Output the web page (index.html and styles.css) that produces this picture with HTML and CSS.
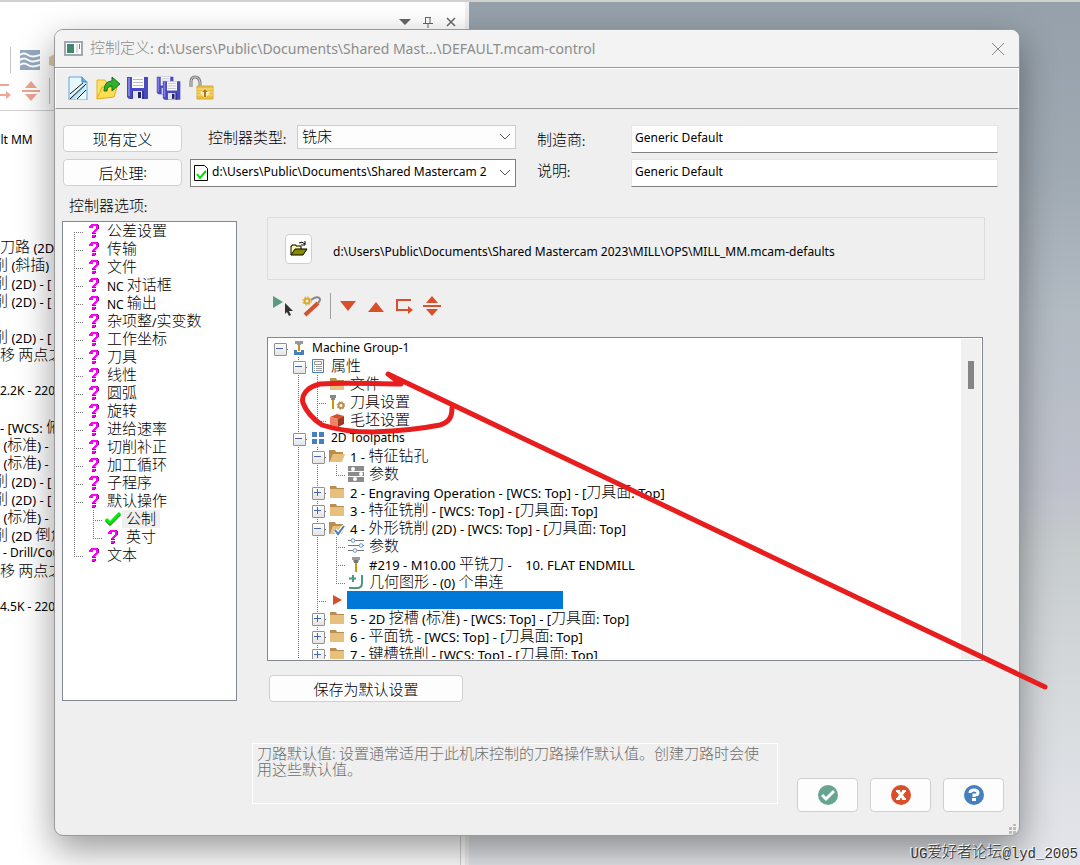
FILE: index.html
```html
<!DOCTYPE html>
<html lang="zh-CN">
<head>
<meta charset="utf-8">
<title>控制定义</title>
<link rel="stylesheet" href="styles.css">
</head>
<body>
<svg class="defs" aria-hidden="true">
  <symbol id="q" viewBox="0 0 12 16"><path d="M1 5V3h1V2h1V1h6v1h1v1h1v3h-1v1H9v1H8v1H7v2H4V9h1V8h1V7h1V6h1V3H5v2z" fill="#f0f"/><path d="M9 1h1v1h1v4h-1V2H9zM4 10h4v1H4z" fill="#909"/><path d="M4 12h4v2H4z" fill="#f0f"/><path d="M4 14h3v1H4zM7 12h1v2H7z" fill="#909"/></symbol>
  <symbol id="check" viewBox="0 0 16 14"><path d="M1 8l4 4L15 2" fill="none" stroke="#070" stroke-width="3"/><path d="M1 7l4 4L15 1" fill="none" stroke="#0e0" stroke-width="3"/></symbol>
  <symbol id="folder" viewBox="0 0 16 16"><path d="M1 2h6l1 2h7v3H1z" fill="#b98e4e"/><path d="M1 5h14v9H1z" fill="#e8c07e"/></symbol>
  <symbol id="folder-open" viewBox="0 0 16 16"><path d="M0 2h6l1 2h7v3H4l-3 7H0z" fill="#b98e4e"/><path d="M4 6h12l-3 8H1z" fill="#e8c07e"/></symbol>
  <symbol id="folder-check" viewBox="0 0 16 16"><path d="M0 2h6l1 2h7v3H4l-3 7H0z" fill="#b98e4e"/><path d="M4 6h12l-3 8H1z" fill="#e8c07e"/><path d="M6 10l3 4 6-8" fill="none" stroke="#fff" stroke-width="4"/><path d="M6 10l3 4 6-8" fill="none" stroke="#4480bd" stroke-width="2"/></symbol>
  <symbol id="machine" viewBox="0 0 16 16"><path d="M4 1h8v3h-2v1H6V4H4z" fill="#999"/><path d="M7 5h2v6H7z" fill="#cc9a00"/><path d="M3 10h3v2h4v-2h3v5H3z" fill="#4480bd"/></symbol>
  <symbol id="props" viewBox="0 0 16 16"><path d="M2.500 1.500h11v13h-11z" fill="#fff" stroke="#4480bd"/><path d="M4.500 3.500h7v3h-7z" fill="#fff" stroke="#999"/><path d="M4 8.500h1M6 8.500h6M4 10.500h1M6 10.500h6M4 12.500h1M6 12.500h6" stroke="#999"/></symbol>
  <symbol id="tool" viewBox="0 0 16 16"><path d="M4 1h8v3h-1l-1 3H6L5 4H4z" fill="#999"/><path d="M6 4h4v3H6z" fill="#777"/><path d="M7 7h2v9H7z" fill="#cc9a00"/></symbol>
  <symbol id="tool-set" viewBox="0 0 16 16"><path d="M1 1h6v3H6v2H2V4H1z" fill="#888"/><path d="M3 6h2v9H3z" fill="#cc9a00"/><circle cx="12" cy="11.500" r="2.500" fill="none" stroke="#b98e4e" stroke-width="2"/><circle cx="12" cy="11.500" r="3.800" fill="none" stroke="#b98e4e" stroke-dasharray="1.500 1.480"/></symbol>
  <symbol id="stock" viewBox="0 0 16 16"><path d="M1 5l7-3 7 2-6 3z" fill="#d94f2b"/><path d="M1 5l8 2v8l-8-2z" fill="#f08068"/><path d="M9 7l6-3v8l-6 3z" fill="#9c3a20"/></symbol>
  <symbol id="grid4" viewBox="0 0 16 16"><path d="M2 2h5v5H2zM9 2h5v5H9zM2 9h5v5H2zM9 9h5v5H9z" fill="#4480bd"/></symbol>
  <symbol id="params-gray" viewBox="0 0 16 16"><path d="M0 0h16v5H0zM0 6h16v4H0zM0 11h16v5H0z" fill="#8b8b8b"/><path d="M0 5.500h16M0 10.500h16" stroke="#fff"/><circle cx="5" cy="3" r="2" fill="#fff"/><circle cx="13" cy="8" r="2" fill="#fff"/><circle cx="7" cy="13" r="2" fill="#fff"/></symbol>
  <symbol id="params" viewBox="0 0 16 16"><path d="M0 2.500h16M0 7.500h16M0 12.500h16" stroke="#777"/><g fill="#fff" stroke="#5f9bd3"><circle cx="5" cy="2.500" r="1.800"/><circle cx="13" cy="7.500" r="1.800"/><circle cx="7" cy="12.500" r="1.800"/></g></symbol>
  <symbol id="geom" viewBox="0 0 16 16"><path d="M5 1v7M1 4.500h7" stroke="#4c9a7e" stroke-width="2"/><path d="M14 1v8q0 5-5 5H1" fill="none" stroke="#4c9a7e" stroke-width="2"/></symbol>
  <symbol id="insert" viewBox="0 0 16 16"><path d="M4 3v10l9-5z" fill="#d94f2b"/></symbol>
  <symbol id="plusminus" viewBox="0 0 20 20"><path d="M10 0l6 7H4zM10 20l6-7H4zM1 9h18v2H1z" fill="#d94f2b"/></symbol>
  <symbol id="step" viewBox="0 0 20 20"><path d="M17 4H3v10h12" fill="none" stroke="#d94f2b" stroke-width="2"/><path d="M14 10l5 4-5 4z" fill="#d94f2b"/></symbol>
  <symbol id="chev" viewBox="0 0 12 8"><path d="M1 1l5 5 5-5" fill="none" stroke="#555"/></symbol>
  <symbol id="disk" viewBox="0 0 24 24"><path d="M1 1h21v22H3l-2-2z" fill="#4a4ac0"/><path d="M2 2h2v18H2z" fill="#8080e4"/><path d="M6 1h12v11H6z" fill="#fafafa"/><path d="M7 3.500h10M7 6.500h10M7 9.500h10" stroke="#b8b8c0"/><path d="M6 15h12v8H6z" fill="#3434a0"/><path d="M7 15h9v8H7z" fill="#e0e4f0"/><path d="M12 16h3v6h-3z" fill="#222266"/></symbol>
</svg>

<div class="app">
  <aside class="manager">
    <header class="manager-head">
      <svg width="12" height="12" viewBox="0 0 12 12"><path d="M0 3h12L6 9z" fill="#666"/></svg>
      <svg width="12" height="12" viewBox="0 0 12 12"><path d="M3.500 1v6M8 1v6M3 1.500h6M1 7.500h10M6 8v4" fill="none" stroke="#666"/></svg>
      <svg width="12" height="12" viewBox="0 0 12 12"><path d="M2 2l8 8M10 2l-8 8" stroke="#666" stroke-width="1.500"/></svg>
    </header>
    <div class="manager-tools">
      <div class="tool-line upper"><i class="sep"></i>
        <svg width="20" height="20" viewBox="0 0 20 20"><path d="M0 0h20v20H0z" fill="#95a9bf"/><path d="M0 5q4-3 8 0t12 0M0 10q4-3 8 0t12 0M0 15q4-3 8 0t12 0" fill="none" stroke="#fff" stroke-width="2"/></svg>
        <svg width="8" height="14" viewBox="0 0 8 14"><path d="M0 4l8-4v14l-8-2z" fill="#dfc9a4"/></svg>
      </div>
      <div class="tool-line faded"><svg width="22" height="20"><use href="#step"/></svg><svg width="20" height="20"><use href="#plusminus"/></svg><i class="sep"></i></div>
    </div>
    <div class="manager-pane">
      <div class="manager-list">
        <p class="first cut">ult MM</p>
        <p><b>刀路</b> (2D</p><p class="cut"><b>削</b> (<b>斜插</b>)</p><p class="cut"><b>削</b> (2D) - [</p><p class="cut"><b>削</b> (2D) - [</p><p></p>
        <p class="cut"><b>削</b> (2D) - [</p><p><b>移 两点之</b></p><p></p><p class="plain">2.2K - 220</p><p></p>
        <p>- [WCS: <b>俯</b></p><p>&nbsp;(<b>标准</b>) -</p><p>&nbsp;(<b>标准</b>) -</p><p class="cut"><b>削</b> (2D) - [</p><p class="cut"><b>削</b> (2D) - [</p>
        <p>&nbsp;(<b>标准</b>) -</p><p class="cut"><b>削</b> (2D <b>倒角</b></p><p class="plain">&nbsp;- Drill/Cou</p><p><b>移 两点之</b></p><p></p><p class="plain">4.5K - 220</p>
      </div>
    </div>
  </aside>
  <main class="viewport"></main>
</div>

<section class="dialog" role="dialog" aria-labelledby="dlg-title">
  <header class="titlebar">
    <svg width="19" height="15" viewBox="0 0 19 15"><path d="M1 1h17v13H1z" fill="#fff" stroke="#a0a8b0" stroke-width="2"/><path d="M3 3h7v9H3z" fill="#3d8a68"/><path d="M3 3h7v2H3z" fill="#4d7899"/><path d="M12 3h2v9h-2z" fill="#ddd"/><path d="M15 3h1v5h-1z" fill="#39a"/></svg>
    <h1 id="dlg-title"><b>控制定义</b>: d:\Users\Public\Documents\Shared Mast...\DEFAULT.mcam-control</h1>
    <button class="close" aria-label="关闭"><svg width="14" height="14" viewBox="0 0 14 14"><path d="M1 1l12 12M13 1L1 13" stroke="#888"/></svg></button>
  </header>

  <nav class="toolbar">
    <button aria-label="新建"><svg width="24" height="24" viewBox="0 0 24 24"><path d="M3 1h13l5 5v18H3z" fill="#e8f8ff" stroke="#5ba5e8"/><path d="M16 1v5h5" fill="#6ab6ee" stroke="#347ab8"/><path d="M4 21L19 8v5L9 23H4z" fill="#b8e4f8"/><path d="M4 18L17 7M4 23L20 8M11 23l9-9" stroke="#111"/></svg></button>
    <button aria-label="打开"><svg width="24" height="24" viewBox="0 0 24 24"><path d="M1 23V4h8l2 3h9v5" fill="#ffe46a" stroke="#e8b020"/><path d="M1 23l5-12h15l-3 10z" fill="#ffdf50" stroke="#e0a818"/><path d="M8 15q0-10 8-10V1l8 7-8 7V10q-5 0-5 5z" fill="#30b030" stroke="#157015"/></svg></button>
    <button aria-label="保存"><svg width="24" height="24"><use href="#disk"/></svg></button>
    <button aria-label="全部保存"><svg width="26" height="26" viewBox="0 0 26 26"><use href="#disk" width="19" height="21"/><use href="#disk" x="6" y="5" width="20" height="21"/></svg></button>
    <button aria-label="解锁"><svg width="26" height="26" viewBox="0 0 26 26"><path d="M3 12V7q0-5 4-5t5 5v4" fill="none" stroke="#777" stroke-width="3"/><path d="M3 12V7q0-5 4-5t5 5v4" fill="none" stroke="#ddd"/><path d="M9 11h16v13H9z" fill="#e8c040" stroke="#d8a838"/><path d="M9 14h16M9 17h16M9 20h16" stroke="#f6e080"/><path d="M17 13l5 5-5 5-5-5z" fill="#fff" opacity=".6"/><path d="M17 14l3 3h-2v5h-2v-5h-2z" fill="#b07818"/></svg></button>
  </nav>

  <form class="form" onsubmit="return false">
    <button class="btn"><b>现有定义</b></button>
    <div class="type-row">
      <label for="ctype"><b>控制器类型</b>:</label>
      <span class="combo"><select id="ctype" class="zh"><option>铣床</option></select><svg width="12" height="8"><use href="#chev"/></svg></span>
    </div>
    <label for="maker"><b>制造商</b>:</label>
    <input id="maker" type="text" value="Generic Default">
    <button class="btn"><b>后处理</b>:</button>
    <span class="combo post">
      <svg width="14" height="16" viewBox="0 0 14 16"><path d="M.5.500h10l3 3v12H.500z" fill="#fff" stroke="#000"/><path d="M3 9l3 4 6-7" fill="none" stroke="#0d0" stroke-width="2"/></svg>
      <select aria-label="后处理"><option>d:\Users\Public\Documents\Shared Mastercam 2</option></select><svg width="12" height="8"><use href="#chev"/></svg></span>
    <label for="desc" class="upper-label"><b>说明</b>:</label>
    <input id="desc" type="text" value="Generic Default">
  </form>

  <div class="body">
    <div class="options">
      <h2><b>控制器选项</b>:</h2>
      <ul class="tree" role="tree">
        <li><i class="g e first"></i><svg class="qi"><use href="#q"/></svg><span><b>公差设置</b></span></li>
        <li><i class="g e"></i><svg class="qi"><use href="#q"/></svg><span><b>传输</b></span></li>
        <li><i class="g e"></i><svg class="qi"><use href="#q"/></svg><span><b>文件</b></span></li>
        <li><i class="g e"></i><svg class="qi"><use href="#q"/></svg><span>NC <b>对话框</b></span></li>
        <li><i class="g e"></i><svg class="qi"><use href="#q"/></svg><span>NC <b>输出</b></span></li>
        <li><i class="g e"></i><svg class="qi"><use href="#q"/></svg><span><b>杂项整</b>/<b>实变数</b></span></li>
        <li><i class="g e"></i><svg class="qi"><use href="#q"/></svg><span><b>工作坐标</b></span></li>
        <li><i class="g e"></i><svg class="qi"><use href="#q"/></svg><span><b>刀具</b></span></li>
        <li><i class="g e"></i><svg class="qi"><use href="#q"/></svg><span><b>线性</b></span></li>
        <li><i class="g e"></i><svg class="qi"><use href="#q"/></svg><span><b>圆弧</b></span></li>
        <li><i class="g e"></i><svg class="qi"><use href="#q"/></svg><span><b>旋转</b></span></li>
        <li><i class="g e"></i><svg class="qi"><use href="#q"/></svg><span><b>进给速率</b></span></li>
        <li><i class="g e"></i><svg class="qi"><use href="#q"/></svg><span><b>切削补正</b></span></li>
        <li><i class="g e"></i><svg class="qi"><use href="#q"/></svg><span><b>加工循环</b></span></li>
        <li><i class="g e"></i><svg class="qi"><use href="#q"/></svg><span><b>子程序</b></span></li>
        <li><i class="g e"></i><svg class="qi"><use href="#q"/></svg><span><b>默认操作</b></span></li>
        <li><i class="g v"></i><i class="g e"></i><svg class="ci"><use href="#check"/></svg><span class="current"><b>公制</b></span></li>
        <li><i class="g v"></i><i class="g e last"></i><svg class="qi"><use href="#q"/></svg><span><b>英寸</b></span></li>
        <li><i class="g e last"></i><svg class="qi"><use href="#q"/></svg><span><b>文本</b></span></li>
      </ul>
    </div>

    <div class="defaults">
      <div class="path-box">
        <button class="btn open" aria-label="打开"><svg width="18" height="16" viewBox="0 0 18 16"><path d="M1 14V5h1V4h4v1h5v3" fill="#ffffa0" stroke="#000"/><path d="M1 14l4-6h12l-4 6z" fill="#8a8a00" stroke="#000"/><path d="M9 2q3-2 6 1M15 0v4h-4" fill="none" stroke="#000"/></svg></button>
        <span>d:\Users\Public\Documents\Shared Mastercam 2023\MILL\OPS\MILL_MM.mcam-defaults</span>
      </div>
      <div class="tree-tools">
        <button aria-label="选择"><svg width="22" height="22" viewBox="0 0 22 22"><path d="M1 1l10 6-10 6z" fill="#5a9a80"/><path d="M13 8l8 8h-4l2 4-2 1-2-4-2 2z" fill="#333"/></svg></button>
        <button aria-label="参数"><svg width="20" height="22" viewBox="0 0 20 22"><path d="M3 20L16 8" stroke="#d94f2b" stroke-width="4"/><path d="M9 5q7-5 9-1 0 3-3 5" fill="none" stroke="#888" stroke-width="2"/><circle cx="5" cy="6" r="2.500" fill="none" stroke="#d8a820" stroke-width="2"/><circle cx="5" cy="6" r="4.200" fill="none" stroke="#d8a820" stroke-dasharray="1.700 1.600"/></svg></button>
        <i class="sep"></i>
        <button aria-label="下移"><svg width="20" height="20" viewBox="0 0 20 20"><path d="M2 5h16l-8 10z" fill="#d94f2b"/></svg></button>
        <button aria-label="上移"><svg width="20" height="20" viewBox="0 0 20 20"><path d="M2 16h16L10 6z" fill="#d94f2b"/></svg></button>
        <button aria-label="插入"><svg width="20" height="20"><use href="#step"/></svg></button>
        <button aria-label="滚动"><svg width="20" height="20"><use href="#plusminus"/></svg></button>
      </div>
      <div class="ops">
        <ul class="tree" role="tree">
          <li><i class="g x root"></i><svg><use href="#machine"/></svg><span>Machine Group-1</span></li>
          <li><i class="g"></i><i class="g x"></i><svg><use href="#props"/></svg><span><b>属性</b></span></li>
          <li><i class="g"></i><i class="g v"></i><i class="g e"></i><svg><use href="#folder"/></svg><span><b>文件</b></span></li>
          <li><i class="g"></i><i class="g v"></i><i class="g e"></i><svg><use href="#tool-set"/></svg><span><b>刀具设置</b></span></li>
          <li><i class="g"></i><i class="g v"></i><i class="g e last"></i><svg><use href="#stock"/></svg><span><b>毛坯设置</b></span></li>
          <li><i class="g"></i><i class="g x"></i><svg><use href="#grid4"/></svg><span>2D Toolpaths</span></li>
          <li class="mixed"><i class="g"></i><i class="g v"></i><i class="g x"></i><svg><use href="#folder-open"/></svg><span>1 - <b>特征钻孔</b></span></li>
          <li><i class="g"></i><i class="g v"></i><i class="g v"></i><i class="g e last"></i><svg><use href="#params-gray"/></svg><span><b>参数</b></span></li>
          <li class="mixed"><i class="g"></i><i class="g v"></i><i class="g x plus"></i><svg><use href="#folder"/></svg><span>2 - Engraving Operation - [WCS: Top] - [<b>刀具面</b>: Top]</span></li>
          <li class="mixed"><i class="g"></i><i class="g v"></i><i class="g x plus"></i><svg><use href="#folder"/></svg><span>3 - <b>特征铣削</b> - [WCS: Top] - [<b>刀具面</b>: Top]</span></li>
          <li class="mixed"><i class="g"></i><i class="g v"></i><i class="g x"></i><svg><use href="#folder-check"/></svg><span>4 - <b>外形铣削</b> (2D) - [WCS: Top] - [<b>刀具面</b>: Top]</span></li>
          <li><i class="g"></i><i class="g v"></i><i class="g v"></i><i class="g e"></i><svg><use href="#params"/></svg><span><b>参数</b></span></li>
          <li class="mixed"><i class="g"></i><i class="g v"></i><i class="g v"></i><i class="g e"></i><svg><use href="#tool"/></svg><span>#219 - M10.00 <b>平铣刀</b> - &nbsp;&nbsp; 10. FLAT ENDMILL</span></li>
          <li class="mixed"><i class="g"></i><i class="g v"></i><i class="g v"></i><i class="g e last"></i><svg><use href="#geom"/></svg><span><b>几何图形</b> - (0) <b>个串连</b></span></li>
          <li><i class="g"></i><i class="g v"></i><i class="g e"></i><svg><use href="#insert"/></svg><span class="insert-bar"></span></li>
          <li class="mixed"><i class="g"></i><i class="g v"></i><i class="g x plus"></i><svg><use href="#folder"/></svg><span>5 - 2D <b>挖槽</b> (<b>标准</b>) - [WCS: Top] - [<b>刀具面</b>: Top]</span></li>
          <li class="mixed"><i class="g"></i><i class="g v"></i><i class="g x plus"></i><svg><use href="#folder"/></svg><span>6 - <b>平面铣</b> - [WCS: Top] - [<b>刀具面</b>: Top]</span></li>
          <li class="mixed"><i class="g"></i><i class="g v"></i><i class="g x plus"></i><svg><use href="#folder"/></svg><span>7 - <b>键槽铣削</b> - [WCS: Top] - [<b>刀具面</b>: Top]</span></li>
        </ul>
        <div class="scroll"><i></i></div>
      </div>
      <button class="btn save"><b>保存为默认设置</b></button>
    </div>
  </div>

  <footer class="foot">
    <p class="note">刀路默认值: 设置通常适用于此机床控制的刀路操作默认值。创建刀路时会使用这些默认值。</p>
    <div class="actions">
      <button class="btn" aria-label="确定"><svg width="20" height="20" viewBox="0 0 20 20"><circle cx="10" cy="10" r="10" fill="#68a590"/><path d="M4 10l4 4 8-8" fill="none" stroke="#fff" stroke-width="3"/></svg></button>
      <button class="btn" aria-label="取消"><svg width="20" height="20" viewBox="0 0 20 20"><circle cx="10" cy="10" r="10" fill="#d94f2b"/><path d="M7 6l6 8M13 6l-6 8" stroke="#fff" stroke-width="3"/><path d="M5 6h4M11 6h4M5 14h4M11 14h4" stroke="#fff" stroke-width="2"/></svg></button>
      <button class="btn" aria-label="帮助"><svg width="20" height="20" viewBox="0 0 20 20"><circle cx="10" cy="10" r="10" fill="#4480bd"/><path d="M6 8q0-3 4-3t4 3q0 2-4 2v2" fill="none" stroke="#fff" stroke-width="3"/><path d="M8 13h4v3H8z" fill="#fff"/></svg></button>
    </div>
  </footer>
  <svg class="grip" width="10" height="10" viewBox="0 0 10 10"><path d="M5 0h3v2H5zM1 3h3v3H1zM5 3h3v3H5zM1 7h3v3H1zM5 7h3v3H5z" fill="#bbb"/></svg>
</section>

<svg class="annotation" aria-hidden="true"><path d="M1045 687L388 374L401 384C375 384 345 382 320 384C306 387 301 396 303 403C306 411 313 419 322 425C340 431 357 432 373 432C398 431 420 429 440 425C450 422 452 416 452 408"/></svg>
<div class="watermark">UG<b>爱好者论坛</b>@lyd_2005</div>
</body>
</html>
```
FILE: styles.css
```css
* { box-sizing: border-box; }
html, body { height: 100%; margin: 0; }
body {
  position: relative;
  overflow: hidden;
  background: #fff;
  color: #000;
  font: 12px/18px "Noto Sans", "Noto Sans CJK SC", sans-serif;
}
b { font: 300 15px/16px "Noto Sans CJK SC", sans-serif; vertical-align: 1px; }
p, h1, h2, ul { margin: 0; padding: 0; }
h1, h2 { font-weight: normal; }
button, input, select { font: inherit; color: inherit; }
button { padding: 0; border: 0; background: none; display: flex; align-items: center; justify-content: center; }
svg { display: block; flex: none; }
.defs { position: absolute; width: 0; height: 0; }
.sep { width: 1px; height: 26px; background: #c4c4c4; }

/* Main window behind the dialog */
.app { display: grid; grid-template-columns: 469px 1fr; height: 100%; border-top: 2px solid #d0d0d0; }
.manager { display: flex; flex-direction: column; background: #fff; border-right: 4px solid #f0f0f0; overflow: hidden; }
.manager-head { height: 42px; display: flex; justify-content: flex-end; gap: 11px; padding: 14px 8px 0; }
.manager-tools { height: 67px; border-bottom: 1px solid #d0d0d0; }
.tool-line { display: flex; align-items: center; height: 31px; }
.upper { padding-left: 10px; gap: 9px; }
.faded { margin-left: -9px; gap: 8px; }
.faded svg { opacity: .5; }
.manager-pane { flex: 1; margin-right: 4px; border-right: 1px solid #d0d0d0; }
.manager-list { width: 55px; font-size: 13px; }
.manager-list p { height: 18px; white-space: nowrap; overflow: hidden; }
.manager-list .first { margin: 20px 0 89px; font-size: 12px; }
.manager-list .cut { text-indent: -7px; }
.manager-list .plain { font-size: 12px; }
.viewport { background: linear-gradient(#95a0aa, #a0aab3 20%, #b2bac2 36%, #bfc2cc 56%, #c6cbcc 63%, #d6dadd 80%, #e3e5ea); }

/* Dialog window */
.dialog {
  position: absolute;
  inset: 29px 60px 29px 54px;
  display: flex;
  flex-direction: column;
  background: #efefef;
  border: 1px solid #999;
  border-radius: 9px;
  box-shadow: 0 14px 36px rgba(0, 0, 0, .4);
}
.titlebar { display: flex; align-items: center; height: 38px; padding: 0 14px 0 9px; background: #f3f3f3; border-radius: 8px 8px 0 0; border-bottom: 1px solid #999; }
.titlebar h1 { flex: 1; padding-left: 7px; font-size: 14px; color: #8c8c8c; }
.toolbar { display: flex; align-items: center; gap: 6px; height: 41px; padding: 0 0 1px 10px; border: 1px solid #fff; border-bottom: 1px solid #999; }

.btn { background: #fdfdfd; border: 1px solid #d0d0d0; border-radius: 4px; height: 27px; }
.form { display: grid; grid-template-columns: 119px 326px 99px 1fr; column-gap: 8px; row-gap: 6px; padding: 16px 21px 0 8px; grid-auto-rows: 28px; }
.form > label { padding: 6px 0 0 13px; }
.form > .upper-label { padding-top: 3px; }
.form > input { width: 100%; height: 28px; padding: 0 3px 4px; border: 1px solid #e6e6e6; border-bottom-color: #808080; background: #fff; }
.type-row { display: flex; justify-content: space-between; padding-left: 18px; }
.type-row label { padding-top: 4px; }
.combo { display: flex; align-items: center; width: 219px; height: 24px; padding: 0 4px; border: 1px solid #ccc; background: #fdfdfd; }
.combo select { flex: 1; min-width: 0; height: 22px; padding: 0; border: 0; background: none; appearance: none; }
.combo .zh { font: 300 15px/20px "Noto Sans CJK SC", sans-serif; padding-bottom: 2px; }
.post { width: 100%; height: 28px; gap: 4px; padding-left: 3px; border-color: #808080; background: #fff; }
.post select { padding-bottom: 3px; }

.body { flex: 1; min-height: 0; display: grid; grid-template-columns: 175px 1fr; gap: 30px; padding: 10px 34px 0 7px; }
.options { display: flex; flex-direction: column; min-height: 0; }
.options h2 { padding-left: 7px; font-size: 12px; height: 24px; }
.options .tree { flex: 1; border: 1px solid #828790; background: #fff; padding: 0 2px; margin-bottom: 1px; }
.defaults { display: flex; flex-direction: column; min-height: 0; padding-top: 20px; }
.path-box { display: flex; align-items: center; gap: 21px; height: 63px; padding-left: 17px; border: 1px solid #dcdcdc; }
.path-box .open { width: 27px; height: 30px; }
.path-box span { padding-top: 6px; }
.tree-tools { display: flex; align-items: center; gap: 8px; height: 57px; padding: 0 0 6px 5px; }
.tree-tools .sep { margin: 0 -1px 0 0; background: #a0a0a0; }
.ops { flex: 1; min-height: 0; display: flex; margin-right: 2px; border: 1px solid #828790; background: #fff; padding: 1px; overflow: hidden; }
.ops .tree { flex: 1; padding-left: 1px; overflow: hidden; }
.scroll { width: 20px; background: #f0f0f0; padding: 22px 7px; }
.scroll i { display: block; height: 28px; background: #858585; }
.save { width: 194px; margin: 14px 0 0 2px; flex: none; }

/* Tree rows: one 19px guide cell per level, then icon and label */
.tree { list-style: none; }
.tree li { display: flex; height: 18px; align-items: center; white-space: nowrap; }
.tree li span { padding: 0 4px; height: 18px; }
.tree .mixed { font-size: 13px; }
.tree svg { width: 16px; height: 16px; margin: 0 1px 0 2px; }
.tree .qi { width: 12px; height: 16px; margin: 0 3px 0 4px; }
.tree .ci { width: 16px; height: 14px; }
.tree .current { background: #efefef; }
.g { position: relative; flex: none; width: 19px; height: 18px; }
.v {
  background: repeating-linear-gradient(#777 0 1px, transparent 1px 2px) 9px 0 / 1px 100% no-repeat;
}
.e, .x {
  background:
    repeating-linear-gradient(#777 0 1px, transparent 1px 2px) 9px 0 / 1px 100% no-repeat,
    repeating-linear-gradient(90deg, #777 0 1px, transparent 1px 2px) 9px 10px / 10px 1px no-repeat;
}
.last { background-size: 1px 10px, 10px 1px; }
.e.first { background-position: 9px 10px, 9px 10px; }
.root { background-size: 0 0, 10px 1px; }
.x::before { content: ""; position: absolute; left: 4px; top: 4px; width: 11px; height: 11px; border: 1px solid #919191; border-radius: 1px; background: linear-gradient(#4466b0, #4466b0) 1px 4px / 7px 1px no-repeat, linear-gradient(#fff, #e4e4e4); }
.plus::before { background: linear-gradient(#4466b0, #4466b0) 1px 4px / 7px 1px no-repeat, linear-gradient(#4466b0, #4466b0) 4px 1px / 1px 7px no-repeat, linear-gradient(#fff, #e4e4e4); }
.tree .insert-bar { width: 216px; margin-left: 1px; background: #0078d7; }

.foot { display: flex; justify-content: space-between; height: 133px; padding: 41px 15px 0 197px; gap: 19px; }
.note { flex: 1; height: 61px; padding: 1px 4px; border: 1px solid #fff; color: #6d6d6d; font: 300 15px/16px "Noto Sans CJK SC", sans-serif; }
.actions { display: flex; gap: 12px; padding-top: 35px; }
.actions .btn { width: 61px; height: 34px; }
.grip { position: absolute; right: 1px; bottom: 1px; }

/* Hand-drawn mark and caption over everything */
.annotation { position: absolute; inset: 0; width: 100%; height: 100%; pointer-events: none; }
.annotation path { fill: none; stroke: #e81e1e; stroke-width: 5; stroke-linecap: round; stroke-linejoin: round; }
.watermark { position: absolute; right: 2px; bottom: 2px; color: #333; font: 14px/18px "Liberation Mono", monospace; text-shadow: -1px -1px #fff; }
```
